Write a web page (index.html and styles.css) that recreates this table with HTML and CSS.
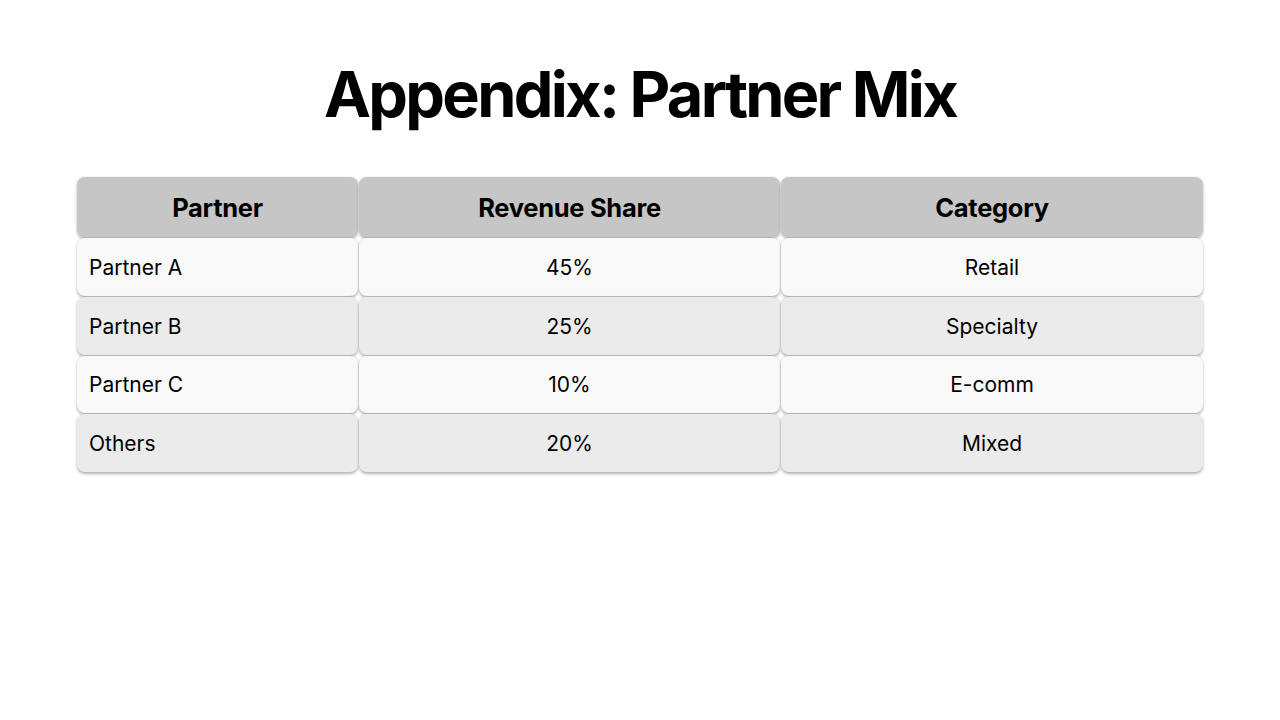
FILE: index.html
```html
<!DOCTYPE html>
<html>
<head>
<meta charset="utf-8">
<link rel="stylesheet" href="styles.css">
</head>
<body>
<div class="slide">
  <h1 class="title">Appendix: Partner Mix</h1>
  <div class="table">
    <div class="cell head">Partner</div>
    <div class="cell head">Revenue Share</div>
    <div class="cell head">Category</div>

    <div class="cell odd left">Partner A</div>
    <div class="cell odd">45%</div>
    <div class="cell odd">Retail</div>

    <div class="cell even left">Partner B</div>
    <div class="cell even">25%</div>
    <div class="cell even">Specialty</div>

    <div class="cell odd left">Partner C</div>
    <div class="cell odd">10%</div>
    <div class="cell odd">E-comm</div>

    <div class="cell even left">Others</div>
    <div class="cell even">20%</div>
    <div class="cell even">Mixed</div>
  </div>
</div>
</body>
</html>
```
FILE: styles.css
```css
html, body {
  margin: 0;
  padding: 0;
  background: #ffffff;
}
.slide {
  width: 1280px;
  height: 720px;
  box-sizing: border-box;
  padding: 54px 77px 0 77px;
  font-family: Inter, "Noto Sans", sans-serif;
  color: #000;
}
.title {
  margin: 0;
  text-align: center;
  font-size: 63px;
  font-weight: 700;
  letter-spacing: -2.7px;
  line-height: 80px;
}
.table {
  margin-top: 43px;
  display: grid;
  grid-template-columns: 281px 421px 422px;
  grid-template-rows: 60px 58px 58px 57px 58px;
  gap: 1px;
}
.cell {
  display: flex;
  align-items: center;
  justify-content: center;
  border-radius: 8px;
  box-shadow: 0 1.5px 3px rgba(0,0,0,0.3);
  font-size: 21px;
  font-weight: 400;
}
.head {
  background: #c6c6c6;
  font-size: 25.5px;
  font-weight: 700;
  letter-spacing: -0.3px;
}
.odd { background: #f9f9f9; }
.even { background: #ebebeb; }
.left {
  justify-content: flex-start;
  padding-left: 12px;
}
```
